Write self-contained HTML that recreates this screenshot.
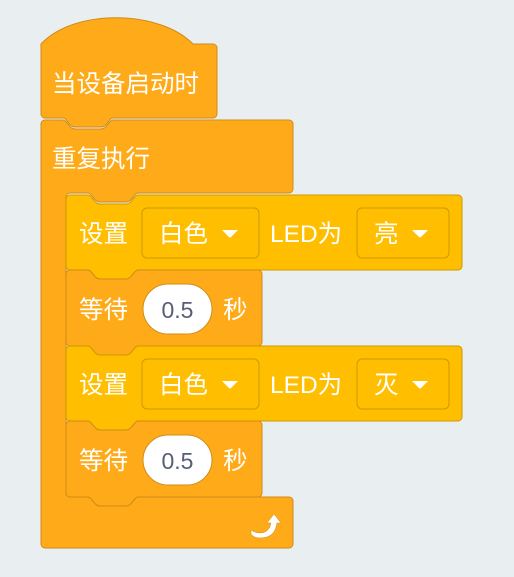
<!DOCTYPE html>
<html><head><meta charset="utf-8"><style>
html,body{margin:0;padding:0;background:#e9eef0;}
svg{display:block}
text{font-family:"Liberation Sans","Noto Sans CJK SC",sans-serif;font-size:24.5px;fill:#fff}
.o{fill:#ffab19;stroke:#cf8b17;stroke-width:1}
.y{fill:#ffbf00;stroke:#cc9900;stroke-width:1}
.dd{fill:#ffbf00;stroke:#cc9900;stroke-width:1}
.num{fill:#575e75;font-size:23px}
</style></head><body>
<svg width="514" height="577" viewBox="0 0 514 577" xmlns="http://www.w3.org/2000/svg">
<rect width="514" height="577" fill="#e9eef0"/>
<path class="o" d="M41,44 C75,8 160,10 193,44 H213 a4,4 0 0 1 4,4 V114 a4,4 0 0 1 -4,4 H113 c-4,0 -6,9 -12,9 h-26 c-6,0 -8,-9 -12,-9 H45 a4,4 0 0 1 -4,-4 Z"/>
<text x="52" y="92">当设备启动时</text>
<path class="o" d="M41,124 a4,4 0 0 1 4,-4 H63 c4,0 6,9 12,9 h26 c6,0 8,-9 12,-9 H289 a4,4 0 0 1 4,4 V189 a4,4 0 0 1 -4,4 H138 c-4,0 -6,9 -12,9 h-26 c-6,0 -8,-9 -12,-9 H70 a4,4 0 0 0 -4,4 V493 a4,4 0 0 0 4,4 H88 c4,0 6,9 12,9 h26 c6,0 8,-9 12,-9 H289 a4,4 0 0 1 4,4 V544 a4,4 0 0 1 -4,4 H45 a4,4 0 0 1 -4,-4 Z"/>
<text x="52" y="167">重复执行</text>
<path class="y" d="M66,199 a4,4 0 0 1 4,-4 H88 c4,0 6,9 12,9 h26 c6,0 8,-9 12,-9 H458 a4,4 0 0 1 4,4 V266 a4,4 0 0 1 -4,4 H138 c-4,0 -6,9 -12,9 h-26 c-6,0 -8,-9 -12,-9 H70 a4,4 0 0 1 -4,-4 Z"/>
<text x="79" y="242">设置</text>
<rect class="dd" x="142" y="208" width="117" height="50" rx="5"/>
<text x="159" y="242">白色</text>
<path d="M222,230 h16 l-7,7 q-1,1 -2,0 Z" fill="#fff"/>
<text x="270" y="242">LED为</text>
<rect class="dd" x="357" y="208" width="92" height="50" rx="5"/>
<text x="374" y="242">亮</text>
<path d="M412,230 h16 l-7,7 q-1,1 -2,0 Z" fill="#fff"/>
<path class="o" d="M66,274 a4,4 0 0 1 4,-4 H88 c4,0 6,9 12,9 h26 c6,0 8,-9 12,-9 H258 a4,4 0 0 1 4,4 V342 a4,4 0 0 1 -4,4 H138 c-4,0 -6,9 -12,9 h-26 c-6,0 -8,-9 -12,-9 H70 a4,4 0 0 1 -4,-4 Z"/>
<text x="79" y="318">等待</text>
<rect x="143" y="284" width="69" height="50" rx="25" fill="#fff" stroke="#cf8b17"/>
<text class="num" x="177.5" y="318" text-anchor="middle">0.5</text>
<text x="223" y="318">秒</text>
<path class="y" d="M66,350 a4,4 0 0 1 4,-4 H88 c4,0 6,9 12,9 h26 c6,0 8,-9 12,-9 H458 a4,4 0 0 1 4,4 V417 a4,4 0 0 1 -4,4 H138 c-4,0 -6,9 -12,9 h-26 c-6,0 -8,-9 -12,-9 H70 a4,4 0 0 1 -4,-4 Z"/>
<text x="79" y="393">设置</text>
<rect class="dd" x="142" y="359" width="117" height="50" rx="5"/>
<text x="159" y="393">白色</text>
<path d="M222,381 h16 l-7,7 q-1,1 -2,0 Z" fill="#fff"/>
<text x="270" y="393">LED为</text>
<rect class="dd" x="357" y="359" width="92" height="50" rx="5"/>
<text x="374" y="393">灭</text>
<path d="M412,381 h16 l-7,7 q-1,1 -2,0 Z" fill="#fff"/>
<path class="o" d="M66,425 a4,4 0 0 1 4,-4 H88 c4,0 6,9 12,9 h26 c6,0 8,-9 12,-9 H258 a4,4 0 0 1 4,4 V493 a4,4 0 0 1 -4,4 H138 c-4,0 -6,9 -12,9 h-26 c-6,0 -8,-9 -12,-9 H70 a4,4 0 0 1 -4,-4 Z"/>
<text x="79" y="469">等待</text>
<rect x="143" y="435" width="69" height="50" rx="25" fill="#fff" stroke="#cf8b17"/>
<text class="num" x="177.5" y="469" text-anchor="middle">0.5</text>
<text x="223" y="469">秒</text>
<path d="M251,530 q4,3 9,3 q9,0 11,-10 l-4,0 l7,-9 l7,9 l-4,0 q-2,15 -17,15 q-6,0 -9,-4 Z" fill="#fff" stroke="#cf8b17" stroke-width="0.5"/>
</svg>
</body></html>
